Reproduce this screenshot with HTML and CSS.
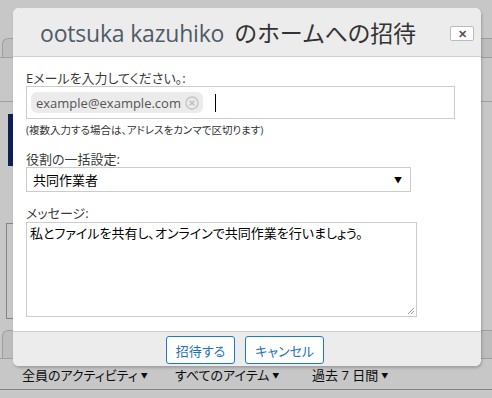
FILE: index.html
```html
<!DOCTYPE html>
<html lang="ja">
<head>
    <meta charset="UTF-8">
    <title>ホームへの招待</title>
    <link rel="stylesheet" href="styles.css">
</head>
<body>
    <div class="page">
        <div class="page-top"></div>
        <div class="page-tabs"></div>
        <div class="page-row"></div>
        <div class="page-side">
            <div class="navy"></div>
            <div class="thumb"></div>
        </div>
        <div class="page-tabs2"></div>
        <div class="page-filter">
            <span class="filter f1">全員のアクティビティ<i>▼</i></span>
            <span class="filter f2">すべてのアイテム<i>▼</i></span>
            <span class="filter">過去 7 日間<i>▼</i></span>
        </div>
    </div>
    <div class="overlay"></div>

    <div class="dialog">
        <div class="dialog-head">
            <h1 class="title"><span class="name">ootsuka kazuhiko</span>のホームへの招待</h1>
            <button class="close">✕</button>
        </div>
        <div class="dialog-body">
            <label class="label">Eメールを入力してください。:</label>
            <div class="email-box">
                <span class="chip">example@example.com<span class="chip-x">
                    <svg width="14" height="14" viewBox="0 0 14 14"><circle cx="7" cy="7" r="6" fill="none" stroke="#c4c4c4" stroke-width="1.4"/><path d="M4.6 4.6 9.4 9.4M9.4 4.6 4.6 9.4" stroke="#c4c4c4" stroke-width="1.6"/></svg>
                </span></span>
                <span class="caret"></span>
            </div>
            <div class="hint">(複数入力する場合は、アドレスをカンマで区切ります)</div>

            <label class="label gap">役割の一括設定:</label>
            <div class="select">共同作業者<span class="arrow">▼</span></div>

            <label class="label gap">メッセージ:</label>
            <div class="message">私とファイルを共有し、オンラインで共同作業を行いましょう。
                <svg class="grip" width="8" height="8" viewBox="0 0 8 8"><path d="M7 1 1 7M7 4 4 7" stroke="#999" stroke-width="1"/></svg>
            </div>
        </div>
        <div class="dialog-foot">
            <button class="btn">招待する</button>
            <button class="btn">キャンセル</button>
        </div>
    </div>
</body>
</html>
```

FILE: styles.css
```css
body {
    margin: 0;
    width: 492px;
    height: 398px;
    overflow: hidden;
    position: relative;
    font-family: 'Open Sans', 'Noto Sans CJK JP', sans-serif;
    font-feature-settings: "palt";
    color: #333;
    background: #fff;
}
.page {
    height: 398px;
}
.page-top {
    height: 38px;
}
.page-tabs {
    height: 18px;
    margin-left: 2px;
    border-top: 1px solid #ccc;
    border-left: 1px solid #ccc;
    border-top-left-radius: 6px;
    background: #f2f2f2;
}
.page-row {
    height: 43px;
    border-top: 1px solid #ccc;
    border-bottom: 1px solid #ccc;
}
.page-side {
    height: 216px;
    padding-left: 8px;
}
.navy {
    width: 30px;
    height: 52px;
    margin-top: 12px;
    background: #102a72;
}
.thumb {
    width: 30px;
    height: 94px;
    margin-top: 57px;
    margin-left: -2px;
    border: 1px solid #aaa;
}
.page-tabs2 {
    height: 27px;
    margin-left: 2px;
    border-top: 1px solid #ccc;
    border-left: 1px solid #ccc;
    border-top-left-radius: 6px;
    background: #f2f2f2;
}
.page-filter {
    height: 30px;
    border-top: 1px solid #ccc;
    border-bottom: 1px solid #aaa;
    display: flex;
    align-items: center;
    padding-left: 22px;
    font-size: 13px;
    color: #111;
}
.filter {
    white-space: nowrap;
}
.f1 {
    width: 153px;
}
.f2 {
    width: 137px;
}
.filter i {
    font-style: normal;
    font-size: 7px;
    margin-left: 3px;
    vertical-align: 2px;
}
.overlay {
    position: absolute;
    inset: 0;
    background: rgba(0, 0, 0, 0.22);
}

.dialog {
    position: absolute;
    left: 13px;
    top: 8px;
    width: 468px;
    height: 358px;
    background: #fff;
    border-radius: 6px;
    box-shadow: 1px 2px 3px rgba(0, 0, 0, 0.2);
    display: flex;
    flex-direction: column;
    overflow: hidden;
}
.dialog-head {
    height: 48px;
    background: #ececec;
    border-bottom: 1px solid #cfcfcf;
    display: flex;
    align-items: center;
    padding: 0 7px 0 27px;
}
.title {
    flex: 1;
    margin: 0;
    font-size: 23px;
    font-weight: normal;
    color: #333;
    white-space: nowrap;
    letter-spacing: -0.2px;
    font-feature-settings: normal;
}
.name {
    color: #4f5b67;
    margin-right: 10px;
}
.close {
    width: 24px;
    height: 15px;
    padding: 0;
    margin-top: 3px;
    background: #fff;
    border: 1px solid #bbb;
    border-radius: 2px;
    font-size: 11px;
    font-weight: bold;
    line-height: 12px;
    color: #555;
}
.dialog-body {
    flex: 1;
    padding: 13px 13px 0 13px;
}
.label {
    display: block;
    font-size: 13px;
    line-height: 16px;
    color: #3a3a3a;
}
.label.gap {
    margin-top: 13px;
}
.email-box {
    height: 31px;
    width: 423px;
    border: 1px solid #ccc;
    display: flex;
    align-items: center;
    padding-left: 4px;
}
.chip {
    display: inline-flex;
    align-items: center;
    height: 21px;
    padding: 0 4px 0 5px;
    background: #ebebeb;
    border-radius: 6px;
    font-size: 13px;
    color: #555;
}
.chip-x {
    display: inline-flex;
    margin-left: 4px;
}
.caret {
    width: 1px;
    height: 18px;
    margin-left: 12px;
    background: #000;
}
.hint {
    margin-top: 3px;
    font-size: 10.5px;
    line-height: 16px;
    color: #333;
}
.select {
    width: 377px;
    height: 23px;
    border: 1px solid #ccc;
    display: flex;
    align-items: center;
    padding-left: 6px;
    font-size: 13px;
    color: #000;
}
.arrow {
    margin-left: auto;
    margin-right: 8px;
    font-size: 8px;
}
.message {
    position: relative;
    width: 383px;
    height: 91px;
    margin-top: 1px;
    border: 1px solid #ccc;
    padding: 2px 3px 0 3px;
    font-size: 13px;
    line-height: 16px;
    color: #000;
    white-space: nowrap;
}
.grip {
    position: absolute;
    right: 1px;
    bottom: 1px;
}
.dialog-foot {
    height: 35px;
    background: #ececec;
    border-top: 1px solid #cfcfcf;
    display: flex;
    justify-content: center;
    align-items: flex-start;
    gap: 10px;
    padding-top: 4px;
    box-sizing: border-box;
    padding-right: 4px;
}
.btn {
    height: 28px;
    padding: 0 9px;
    background: #fff;
    border: 1px solid #1e7ac6;
    border-radius: 3px;
    font-family: 'Open Sans', 'Noto Sans CJK JP', sans-serif;
    font-feature-settings: "palt";
    font-size: 13px;
    color: #1e72b8;
}
```
